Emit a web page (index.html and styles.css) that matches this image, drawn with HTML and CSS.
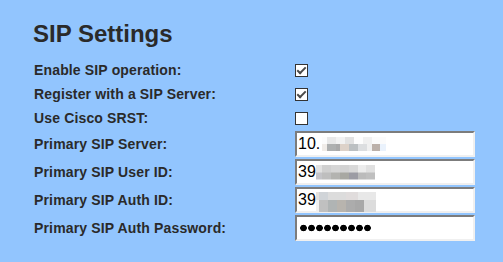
FILE: index.html
```html
<!DOCTYPE html>
<html lang="en">
<head>
  <meta charset="UTF-8" />
  <title>SIP Settings</title>
  <link rel="stylesheet" href="styles.css">
</head>
<body>
  <div class="settings">
    <h2>SIP Settings</h2>

    <div class="form-grid">
      <label class="row-label check-row">Enable SIP operation:</label>
      <div class="check-row"><span class="checkbox checked"></span></div>

      <label class="row-label check-row">Register with a SIP Server:</label>
      <div class="check-row"><span class="checkbox checked"></span></div>

      <label class="row-label check-row">Use Cisco SRST:</label>
      <div class="check-row"><span class="checkbox"></span></div>

      <label class="row-label field-row">Primary SIP Server:</label>
      <div class="field-row">
        <div class="field"><span class="val">10.</span><span class="mosaic mosaic-server"></span></div>
      </div>

      <label class="row-label field-row">Primary SIP User ID:</label>
      <div class="field-row">
        <div class="field"><span class="val">39</span><span class="mosaic mosaic-user"></span></div>
      </div>

      <label class="row-label field-row">Primary SIP Auth ID:</label>
      <div class="field-row">
        <div class="field"><span class="val">39</span><span class="mosaic mosaic-auth"></span></div>
      </div>

      <label class="row-label field-row">Primary SIP Auth Password:</label>
      <div class="field-row">
        <div class="field"><span class="dots"></span></div>
      </div>
    </div>
  </div>
</body>
</html>
```

FILE: styles.css
```css
* {
  box-sizing: border-box;
  font-family: Arial, "Liberation Sans", sans-serif;
}

body {
  margin: 0;
  background-color: #92c5fe;
  height: 262px;
  overflow: hidden;
}

.settings {
  padding: 20px 0 0 33px;
}

.settings h2 {
  margin: 0 0 10px;
  font-size: 24px;
  line-height: 28px;
  font-weight: bold;
  color: #2a2a2a;
}

.form-grid {
  display: grid;
  grid-template-columns: 262px 180px;
}

.row-label {
  font-size: 14px;
  font-weight: bold;
  letter-spacing: 0.15px;
  color: #2a2a2a;
  padding-left: 1px;
  display: flex;
  align-items: center;
}

.check-row {
  height: 24px;
  display: flex;
  align-items: center;
}

.field-row {
  height: 28px;
  display: flex;
  align-items: center;
}

/* checkboxes */
.checkbox {
  width: 13px;
  height: 13px;
  border: 1px solid #333;
  background: #fff;
  display: flex;
  align-items: center;
  justify-content: center;
}

.checkbox.checked::after {
  content: "";
  width: 7px;
  height: 3px;
  border-left: 2px solid #4a4a4a;
  border-bottom: 2px solid #4a4a4a;
  transform: translateY(-1px) rotate(-45deg);
}

/* text fields */
.field {
  width: 180px;
  height: 26px;
  background: #fff;
  border-style: solid;
  border-width: 2px;
  border-color: #7c7c7c #f0f0f0 #f0f0f0 #7c7c7c;
  padding-left: 1px;
  display: flex;
  align-items: center;
}

.val {
  font-size: 16px;
  color: #000;
  line-height: 20px;
}

/* blurred part of the values */
.mosaic {
  height: 14px;
  display: inline-block;
}

.mosaic-server {
  width: 64px;
  margin-left: 2px;
  background:
    linear-gradient(to right, #fcfcfc 0 5px, #e8e8e8 5px 14px, #f2f2f2 14px 23px, #e2e2e2 23px 32px, #fdfdfd 32px 41px, #f0f0f0 41px 50px, #fbfbfb 50px) top / 100% 50% no-repeat,
    linear-gradient(to right, #f0ece8 0 5px, #aeb0b0 5px 14px, #a9a9a9 14px 18px, #ddd2c9 18px 27px, #bcc0c2 27px 36px, #dcdee0 36px 45px, #f0f0f0 45px 50px, #bcb1aa 50px 58px, #eaf2fc 58px) bottom / 100% 50% no-repeat;
}

.mosaic-user {
  width: 59px;
  height: 15px;
  background:
    linear-gradient(to right, #e2e2e2 0 6px, #d0d0d0 6px 15px, #d6d6d6 15px 24px, #d2d2d2 24px 33px, #d8d8d8 33px 42px, #ececec 42px 50px, #e0e0e0 50px) top / 100% 50% no-repeat,
    linear-gradient(to right, #c4c4c8 0 6px, #bebebe 6px 15px, #b3b3b0 15px 24px, #a8a8a2 24px 33px, #9c9ca4 33px 42px, #bbbbbb 42px 50px, #bfbfbf 50px) bottom / 100% 50% no-repeat;
}

.mosaic-auth {
  width: 60px;
  height: 20px;
  margin-top: 3px;
  background:
    linear-gradient(to right, #e4e0dc 0 3px, #d0d4d8 3px 12px, #dcdcdc 12px 30px, #e0dcdc 30px 42px, #e8e8e8 42px) top / 100% 40% no-repeat,
    linear-gradient(to right, #f0f0f0 0 3px, #c0c0c0 3px 12px, #b0b4b4 12px 21px, #b8b4ae 21px 30px, #acacac 30px 39px, #a8a8a8 39px 48px, #dcdcdc 48px) bottom / 100% 60% no-repeat;
}

.dots {
  width: 72px;
  height: 8px;
  margin-left: 2px;
  background: radial-gradient(circle at 3.5px 4px, #000 3px, transparent 3.6px) 0 0 / 8px 8px repeat-x;
}
```
